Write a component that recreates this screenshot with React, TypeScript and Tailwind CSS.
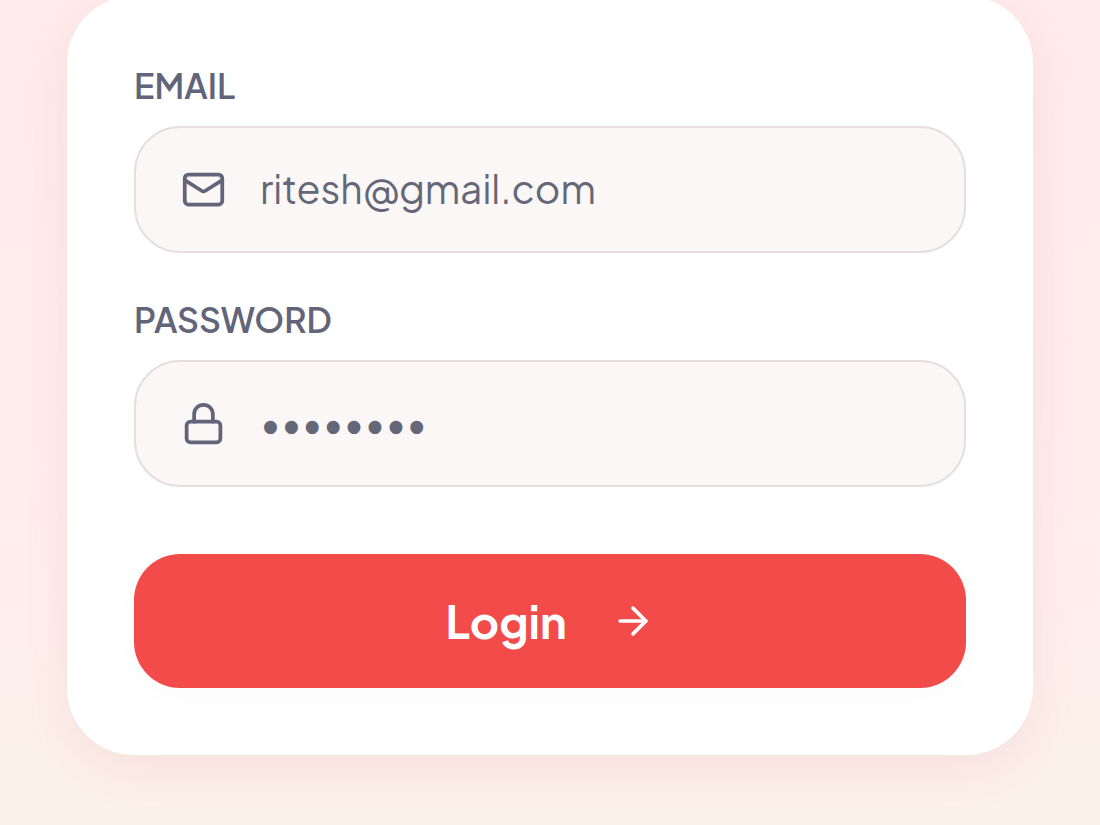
import { useState } from 'react';
import type { ReactNode } from 'react';
import { ArrowRight, Lock } from 'lucide-react';

type FieldProps = {
  id: string;
  label: string;
  type: 'email' | 'password';
  value: string;
  icon: ReactNode;
  onChange: (value: string) => void;
};

function MailIcon() {
  return (
    <svg
      viewBox="0 0 24 24"
      fill="none"
      stroke="currentColor"
      strokeWidth={2}
      strokeLinecap="round"
      strokeLinejoin="round"
      aria-hidden="true"
      className="size-[45px] shrink-0"
    >
      <rect x="2" y="4" width="20" height="16" rx="2" />
      <path d="M22 7l-9.2 5.8a1.5 1.5 0 0 1-1.6 0L2 7" />
    </svg>
  );
}

function Field({ id, label, type, value, icon, onChange }: FieldProps) {
  return (
    <div>
      <label htmlFor={id} className="block text-[34px] leading-10 font-semibold text-[#62647a]">
        {label}
      </label>
      <div className="mt-5 flex h-[127px] items-center gap-[34px] rounded-[46px] border-2 border-[#e6dfe1] bg-[#fbf7f7] px-[45px] text-[#62647a]">
        {icon}
        <input
          id={id}
          type={type}
          value={value}
          onChange={(e) => onChange(e.target.value)}
          className="min-w-0 flex-1 bg-transparent text-[39px] text-[#646778] outline-none"
        />
      </div>
    </div>
  );
}

export default function App() {
  const [email, setEmail] = useState('ritesh@gmail.com');
  const [password, setPassword] = useState('password');

  return (
    <main className="flow-root min-h-screen bg-linear-to-b from-[#ffebea] via-[#ffecec] to-[#fcf1ea] px-[67px] pb-[70px] font-['Plus_Jakarta_Sans','Open_Sans',sans-serif]">
      <form
        onSubmit={(e) => e.preventDefault()}
        className="-mt-1 rounded-[67px] bg-white px-[67px] pt-[70px] pb-[67px] shadow-[0_16px_48px_rgba(190,80,95,0.09)]"
      >
        <Field
          id="email"
          label="EMAIL"
          type="email"
          value={email}
          icon={<MailIcon />}
          onChange={setEmail}
        />
        <div className="mt-[47px]">
          <Field
            id="password"
            label="PASSWORD"
            type="password"
            value={password}
            icon={<Lock className="size-[45px] shrink-0" />}
            onChange={setPassword}
          />
        </div>
        <button
          type="submit"
          className="mt-[67px] flex h-[134px] w-full items-center justify-center gap-11 rounded-[46px] bg-[#f34a4a] text-[45px] font-bold text-white shadow-[0_8px_32px_rgba(120,60,160,0.02)]"
        >
          Login
          <ArrowRight className="size-11" />
        </button>
      </form>
    </main>
  );
}
